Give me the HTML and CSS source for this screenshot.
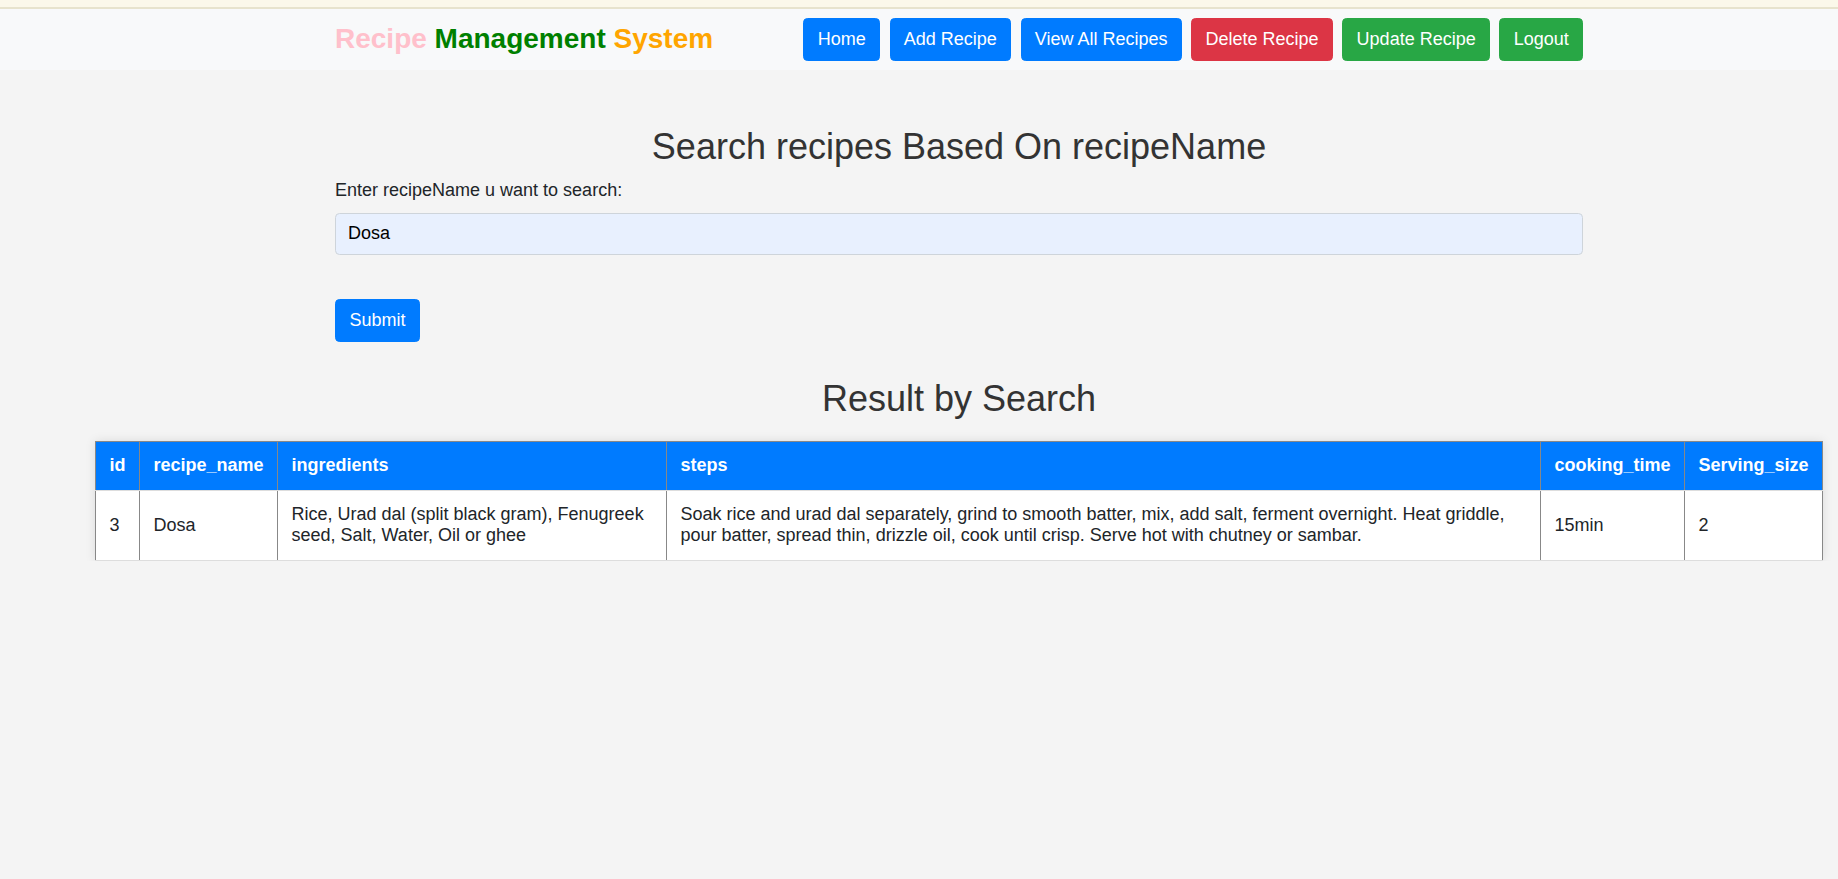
FILE: index.html
```html
<!DOCTYPE html>
<html lang="en">
<head>
<meta charset="utf-8">
<title>Recipe Management System</title>
<link rel="stylesheet" href="styles.css">
</head>
<body>
<div class="topstrip"></div>
<nav class="navbar">
  <div class="shift">
    <div class="container nav-inner">
      <a class="brand" href="#"><span class="b-pink">Recipe</span> <span class="b-green">Management</span> <span class="b-orange">System</span></a>
      <div class="nav-btns">
        <a class="btn btn-blue" href="#">Home</a>
        <a class="btn btn-blue" href="#">Add Recipe</a>
        <a class="btn btn-blue" href="#">View All Recipes</a>
        <a class="btn btn-red" href="#">Delete Recipe</a>
        <a class="btn btn-green" href="#">Update Recipe</a>
        <a class="btn btn-green" href="#">Logout</a>
      </div>
    </div>
  </div>
</nav>
<main class="shift">
  <div class="container main">
    <h2 class="title">Search recipes Based On recipeName</h2>
    <form class="search-form">
      <div class="field">
        <label class="label" for="q">Enter recipeName u want to search:</label>
        <input class="input" id="q" type="text" value="Dosa">
      </div>
      <button class="btn btn-blue" type="button">Submit</button>
    </form>
    <h2 class="title result-title">Result by Search</h2>
  </div>
  <div class="table-wrap">
    <table class="results">
      <colgroup>
        <col class="c-id">
        <col class="c-name">
        <col class="c-ing">
        <col class="c-steps">
        <col class="c-time">
        <col class="c-size">
      </colgroup>
      <thead>
        <tr>
          <th>id</th>
          <th>recipe_name</th>
          <th>ingredients</th>
          <th>steps</th>
          <th>cooking_time</th>
          <th>Serving_size</th>
        </tr>
      </thead>
      <tbody>
        <tr>
          <td>3</td>
          <td>Dosa</td>
          <td>Rice, Urad dal (split black gram), Fenugreek seed, Salt, Water, Oil or ghee</td>
          <td>Soak rice and urad dal separately, grind to smooth batter, mix, add salt, ferment overnight. Heat griddle, pour batter, spread thin, drizzle oil, cook until crisp. Serve hot with chutney or sambar.</td>
          <td>15min</td>
          <td>2</td>
        </tr>
      </tbody>
    </table>
  </div>
</main>
</body>
</html>
```

FILE: styles.css
```css
* { box-sizing: border-box; }

html { font-size: 18px; }

body {
  margin: 0;
  background: #f4f4f4;
  font-family: "Liberation Sans", Arial, sans-serif;
  font-size: 18px;
  line-height: 1.5;
  color: #212529;
}

.topstrip {
  height: 9px;
  background: #fbf8ea;
  border-bottom: 2px solid #e7e3cd;
}

.shift {
  padding-left: 80px;
}

.container {
  width: 1248px;
  margin: 0 auto;
}

.navbar {
  background: #f8f9fa;
  padding: 9px 0 9px;
}

.nav-inner {
  display: flex;
  align-items: center;
  justify-content: space-between;
}

.brand {
  font-size: 28px;
  font-weight: bold;
  line-height: normal;
  text-decoration: none;
}

.b-pink { color: #ffc0cb; }
.b-green { color: #008000; }
.b-orange { color: #ffa500; }

.nav-btns {
  display: flex;
  gap: 9.5px;
}

.nav-btns .btn {
  padding-left: 13.25px;
  padding-right: 13.25px;
}

.btn {
  display: inline-block;
  font-family: inherit;
  font-size: 18px;
  line-height: 27px;
  padding: 6.75px 13.5px;
  border: 1px solid transparent;
  border-radius: 4.5px;
  color: #fff;
  text-decoration: none;
  cursor: pointer;
}

.btn-blue { background: #007bff; border-color: #007bff; }
.btn-red { background: #dc3545; border-color: #dc3545; }
.btn-green { background: #28a745; border-color: #28a745; }

.main {
  padding-top: 55px;
}

.title {
  margin: 0 0 9px;
  font-size: 36px;
  font-weight: 500;
  line-height: 1.2;
  color: #333;
  text-align: center;
}

.label {
  display: block;
  margin-bottom: 9px;
}

.field {
  margin-bottom: 44px;
}

.input {
  display: block;
  width: 100%;
  height: 42.5px;
  padding: 6.75px 12px;
  font-family: inherit;
  font-size: 18px;
  line-height: 27px;
  color: #000;
  background: #e8f0fe;
  border: 1px solid #ced4da;
  border-radius: 4.5px;
}

.result-title {
  margin-top: 35px;
  margin-bottom: 21px;
}

.table-wrap {
  padding: 0 15px;
}

.results {
  width: 100%;
  table-layout: fixed;
  border-collapse: collapse;
  background: #fff;
  box-shadow: 0 0 10px rgba(0, 0, 0, 0.1);
  line-height: normal;
}

.c-id { width: 44px; }
.c-name { width: 138px; }
.c-ing { width: 389px; }
.c-steps { width: 874px; }
.c-time { width: 144px; }

.results th,
.results td {
  padding: 13.5px 13.5px;
  text-align: left;
  vertical-align: middle;
}

.results th {
  background: #007bff;
  color: #fff;
  font-weight: bold;
  border: 1px solid #888;
  border-bottom-color: #ddd;
}

.results td {
  color: #212529;
  border-left: 1px solid #888;
  border-right: 1px solid #888;
  border-bottom: 1px solid #ddd;
}
```
